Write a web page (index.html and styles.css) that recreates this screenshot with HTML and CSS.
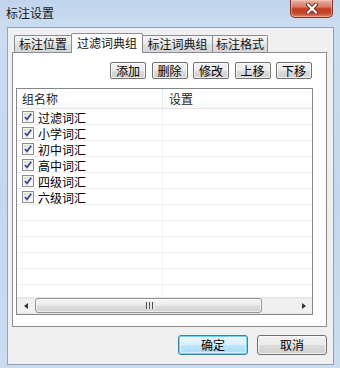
FILE: index.html
```html
<!DOCTYPE html>
<html lang="zh-CN">
<head>
<meta charset="utf-8">
<title>标注设置</title>
<link rel="stylesheet" href="styles.css">
</head>
<body>
<div class="window">
  <div class="titlebar">
    <span class="title">标注设置</span>
    <div class="close">
      <svg width="14" height="11" viewBox="0 0 14 11">
        <path d="M3 1.5 L11 9.5 M11 1.5 L3 9.5" stroke="#6b2a20" stroke-width="4" stroke-linecap="round"/>
        <path d="M3 1.5 L11 9.5 M11 1.5 L3 9.5" stroke="#ffffff" stroke-width="2.2" stroke-linecap="round"/>
      </svg>
    </div>
  </div>
  <div class="client">
    <div class="tabs">
      <div class="tab t1">标注位置</div>
      <div class="tab t2 active">过滤词典组</div>
      <div class="tab t3">标注词典组</div>
      <div class="tab t4">标注格式</div>
    </div>
    <div class="panel">
      <div class="toolbar">
        <div class="btn small">添加</div>
        <div class="btn small">删除</div>
        <div class="btn small">修改</div>
        <div class="btn small">上移</div>
        <div class="btn small">下移</div>
      </div>
      <div class="list">
        <div class="header">
          <div class="hcell c1">组名称</div>
          <div class="hcell c2">设置</div>
        </div>
        <div class="body">
          <div class="row"><span class="cb"></span>过滤词汇</div>
          <div class="row"><span class="cb"></span>小学词汇</div>
          <div class="row"><span class="cb"></span>初中词汇</div>
          <div class="row"><span class="cb"></span>高中词汇</div>
          <div class="row"><span class="cb"></span>四级词汇</div>
          <div class="row"><span class="cb"></span>六级词汇</div>
        </div>
        <div class="hscroll">
          <div class="arrow"><span class="tri left"></span></div>
          <div class="track"><div class="thumb"><span class="grip"></span></div></div>
          <div class="arrow"><span class="tri right"></span></div>
        </div>
      </div>
    </div>
    <div class="actions">
      <div class="btn big default">确定</div>
      <div class="btn big">取消</div>
    </div>
  </div>
</div>
</body>
</html>
```
FILE: styles.css
```css
* { box-sizing: border-box; }
html, body { margin: 0; padding: 0; }
body {
  width: 340px;
  height: 368px;
  overflow: hidden;
  font-family: "Noto Sans CJK SC", "Noto Sans", sans-serif;
  font-size: 12px;
  color: #000;
}
.window {
  width: 340px;
  height: 368px;
  background: linear-gradient(to bottom, #bfd5ec 0, #cadcf0 26px, #c3d8ee 200px, #c9dcf0 100%);
  display: flex;
  flex-direction: column;
}
.titlebar {
  height: 27px;
  flex: none;
  display: flex;
  justify-content: space-between;
  align-items: flex-start;
  padding: 0 7px 0 6px;
}
.title {
  margin-top: 4px;
  line-height: 17px;
  color: #1a1a1a;
}
.close {
  width: 43px;
  height: 18px;
  border: 1px solid #7d3426;
  border-top: none;
  border-radius: 0 0 5px 5px;
  background: linear-gradient(to bottom, #eab1a2 0, #d77a63 40%, #c43d22 52%, #c9492d 78%, #de7f66 100%);
  box-shadow: inset 0 0 0 1px rgba(255, 220, 210, 0.45);
  display: flex;
  align-items: center;
  justify-content: center;
}
.client {
  margin-left: 7px;
  width: 327px;
  height: 338px;
  background: #f0f0f0;
  border: 1px solid #8ea3ba;
  padding: 5px 6px 0 4px;
  display: flex;
  flex-direction: column;
}
.tabs {
  display: flex;
  align-items: flex-end;
  height: 20px;
  padding-left: 2px;
  position: relative;
  z-index: 1;
}
.tab {
  height: 17px;
  margin-bottom: 1px;
  border: 1px solid #898c95;
  border-bottom: none;
  border-right: none;
  background: linear-gradient(to bottom, #f3f3f3 0, #ebebeb 50%, #dedede 50%, #d6d6d6 100%);
  text-align: center;
  line-height: 16px;
  color: #111;
}
.t1 { width: 57px; border-radius: 2px 0 0 0; }
.t2 { width: 72px; }
.t3 { width: 69px; border-left: none; }
.t4 { width: 56px; border-right: 1px solid #898c95; border-radius: 0 2px 0 0; }
.tab.active {
  height: 20px;
  margin-bottom: 0;
  background: #fff;
  border-right: 1px solid #898c95;
  border-radius: 2px 2px 0 0;
  line-height: 18px;
}
.panel {
  margin-top: -1px;
  height: 275px;
  background: #fff;
  border: 1px solid #898c95;
  padding: 9px 13px 0 3px;
  display: flex;
  flex-direction: column;
}
.toolbar {
  display: flex;
  justify-content: flex-end;
  gap: 5.5px;
  padding-right: 1px;
}
.btn {
  border: 1px solid #707070;
  border-radius: 3px;
  background: linear-gradient(to bottom, #f2f2f2 0, #ebebeb 50%, #dddddd 50%, #cfcfcf 100%);
  box-shadow: inset 0 0 0 1px rgba(255, 255, 255, 0.7);
  display: flex;
  align-items: center;
  justify-content: center;
  color: #000;
}
.btn.small {
  width: 36px;
  height: 17px;
  border-radius: 2px;
  line-height: 15px;
}
.list {
  margin-top: 9px;
  width: 297px;
  height: 227px;
  border: 1px solid #828790;
  display: flex;
  flex-direction: column;
}
.header {
  height: 20px;
  flex: none;
  display: flex;
  border-bottom: 1px solid #e5e5e5;
  background: linear-gradient(to bottom, #ffffff 0, #ffffff 60%, #f7f8f9 100%);
}
.hcell {
  display: flex;
  align-items: center;
  padding-left: 5px;
  color: #1e1e1e;
}
.c1 { width: 146px; border-right: 1px solid #e3e8ee; }
.c2 { flex: 1; padding-left: 6px; }
.body {
  flex: 1;
  background:
    linear-gradient(to right, transparent 0, transparent 145px, #f0f0f0 145px, #f0f0f0 146px, transparent 146px),
    repeating-linear-gradient(to bottom, #fff 0, #fff 15px, #f0f0f0 15px, #f0f0f0 16px);
}
.row {
  height: 16px;
  display: flex;
  align-items: center;
  padding-left: 5px;
  line-height: 15px;
}
.cb {
  width: 12px;
  height: 12px;
  margin-right: 4px;
  border: 1px solid #8e8f8f;
  background:
    url("data:image/svg+xml;utf8,<svg xmlns='http://www.w3.org/2000/svg' width='10' height='10' viewBox='0 0 10 10'><path d='M2 5 L4 7.5 L8.2 1.8' fill='none' stroke='%23313f8c' stroke-width='1.6'/></svg>") center / 10px 10px no-repeat,
    linear-gradient(135deg, #d8d8d8 0, #f2f2f2 60%, #fdfdfd 100%);
  box-shadow: inset 0 0 0 1px #f4f4f4;
}
.hscroll {
  height: 17px;
  flex: none;
  display: flex;
  background: linear-gradient(to bottom, #e3e3e3 0, #efefef 15%, #f1f1f1 85%, #e6e6e6 100%);
}
.arrow {
  width: 17px;
  display: flex;
  align-items: center;
  justify-content: center;
}
.tri {
  width: 0;
  height: 0;
  border-top: 3.5px solid transparent;
  border-bottom: 3.5px solid transparent;
}
.tri.left { border-right: 4px solid #333; }
.tri.right { border-left: 4px solid #333; }
.track {
  flex: 1;
  padding: 1px 0 1px 1px;
}
.thumb {
  width: 227px;
  height: 15px;
  border: 1px solid #979797;
  border-radius: 3px;
  background: linear-gradient(to bottom, #f7f7f7 0, #ececec 45%, #dcdcdc 55%, #d2d2d2 100%);
  box-shadow: inset 0 0 0 1px rgba(255, 255, 255, 0.6);
  display: flex;
  align-items: center;
  justify-content: center;
}
.grip {
  width: 9px;
  height: 7px;
  margin-left: 3px;
  background: repeating-linear-gradient(to right, #4e4e4e 0, #4e4e4e 1px, #eaeaea 1px, #eaeaea 3px);
}
.actions {
  margin-top: 8px;
  display: flex;
  justify-content: flex-end;
  gap: 9px;
}
.btn.big {
  width: 70px;
  height: 20px;
  line-height: 18px;
}
.btn.default {
  border-color: #3c7fb1;
  background: linear-gradient(to bottom, #eaf6fd 0, #d9f0fc 50%, #bee6fd 50%, #a7d9f5 100%);
  box-shadow: inset 0 0 0 1px #6fd3f6, inset 0 0 0 2px rgba(255, 255, 255, 0.5);
}
```
